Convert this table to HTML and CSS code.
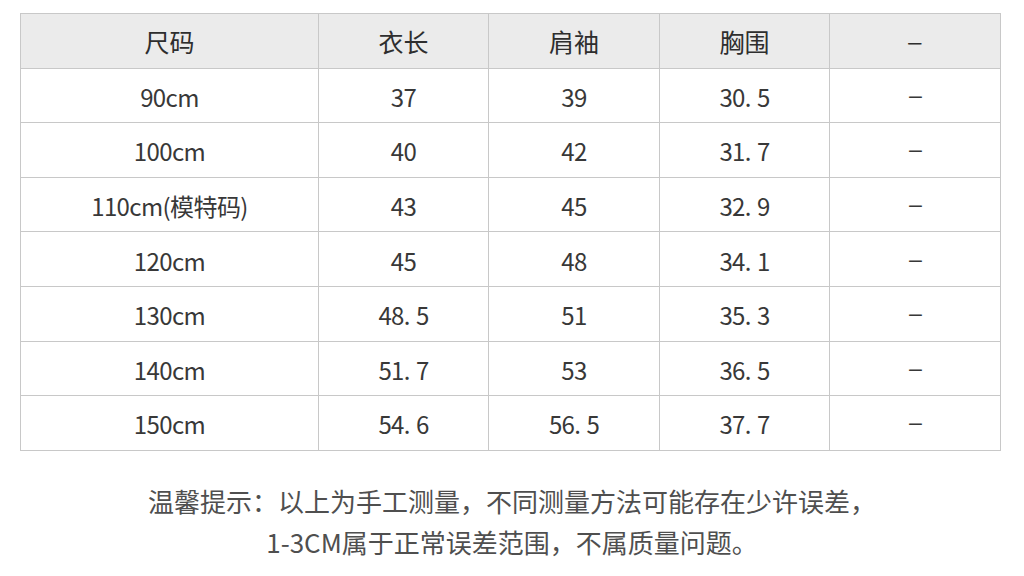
FILE: index.html
```html
<!DOCTYPE html>
<html lang="zh-CN">
<head>
<meta charset="utf-8">
<title>尺码表</title>
<link rel="stylesheet" href="styles.css">
</head>
<body>
<div class="page">
  <table class="size-table">
    <colgroup>
      <col class="c1"><col class="c2"><col class="c3"><col class="c4"><col class="c5">
    </colgroup>
    <thead>
      <tr><th>尺码</th><th>衣长</th><th>肩袖</th><th>胸围</th><th><span class="dash">–</span></th></tr>
    </thead>
    <tbody>
      <tr><td>90cm</td><td>37</td><td>39</td><td>30.<span class="gap"></span>5</td><td><span class="dash">–</span></td></tr>
      <tr><td>100cm</td><td>40</td><td>42</td><td>31.<span class="gap"></span>7</td><td><span class="dash">–</span></td></tr>
      <tr><td>110cm(模特码)</td><td>43</td><td>45</td><td>32.<span class="gap"></span>9</td><td><span class="dash">–</span></td></tr>
      <tr><td>120cm</td><td>45</td><td>48</td><td>34.<span class="gap"></span>1</td><td><span class="dash">–</span></td></tr>
      <tr><td>130cm</td><td>48.<span class="gap"></span>5</td><td>51</td><td>35.<span class="gap"></span>3</td><td><span class="dash">–</span></td></tr>
      <tr><td>140cm</td><td>51.<span class="gap"></span>7</td><td>53</td><td>36.<span class="gap"></span>5</td><td><span class="dash">–</span></td></tr>
      <tr><td>150cm</td><td>54.<span class="gap"></span>6</td><td>56.<span class="gap"></span>5</td><td>37.<span class="gap"></span>7</td><td><span class="dash">–</span></td></tr>
    </tbody>
  </table>
  <div class="note">
    <p>温馨提示：以上为手工测量，不同测量方法可能存在少许误差，</p>
    <p>1-3CM属于正常误差范围，不属质量问题。</p>
  </div>
</div>
</body>
</html>
```

FILE: styles.css
```css
html, body {
  margin: 0;
  padding: 0;
  background: #ffffff;
}

body {
  font-family: "Noto Sans CJK SC", "Noto Sans", sans-serif;
  color: #3a3a3a;
}

.page {
  width: 1024px;
  height: 576px;
  padding: 13px 0 0 20px;
  box-sizing: border-box;
  overflow: hidden;
}

.size-table {
  width: 981px;
  border-collapse: collapse;
  table-layout: fixed;
}

.c1 { width: 298px; }
.c2 { width: 170px; }
.c3 { width: 171px; }
.c4 { width: 170px; }
.c5 { width: 171px; }

.size-table tr {
  height: 54.6px;
}

.size-table th,
.size-table td {
  border: 1px solid #c8c8c8;
  padding: 0;
  text-align: center;
  vertical-align: middle;
  font-size: 24px;
  line-height: 24px;
  font-weight: normal;
  white-space: nowrap;
}

.size-table th {
  background: #ebebeb;
  color: #2e2e2e;
  font-size: 25px;
}

.size-table td {
  background: #ffffff;
  color: #383838;
  letter-spacing: -0.6px;
  padding-top: 3px;
}

.dash {
  display: inline-block;
  letter-spacing: 0;
  transform: translateY(-1px) scaleX(1.2);
}

.size-table td .dash {
  transform: translateY(-3px) scaleX(1.2);
}

.gap {
  display: inline-block;
  width: 6px;
  height: 1px;
}

.note {
  margin-top: 29px;
  margin-left: -20px;
  width: 1024px;
  text-align: center;
  color: #4f4f4f;
  font-size: 26px;
}

.note p {
  margin: 0;
  line-height: 41px;
}
```
